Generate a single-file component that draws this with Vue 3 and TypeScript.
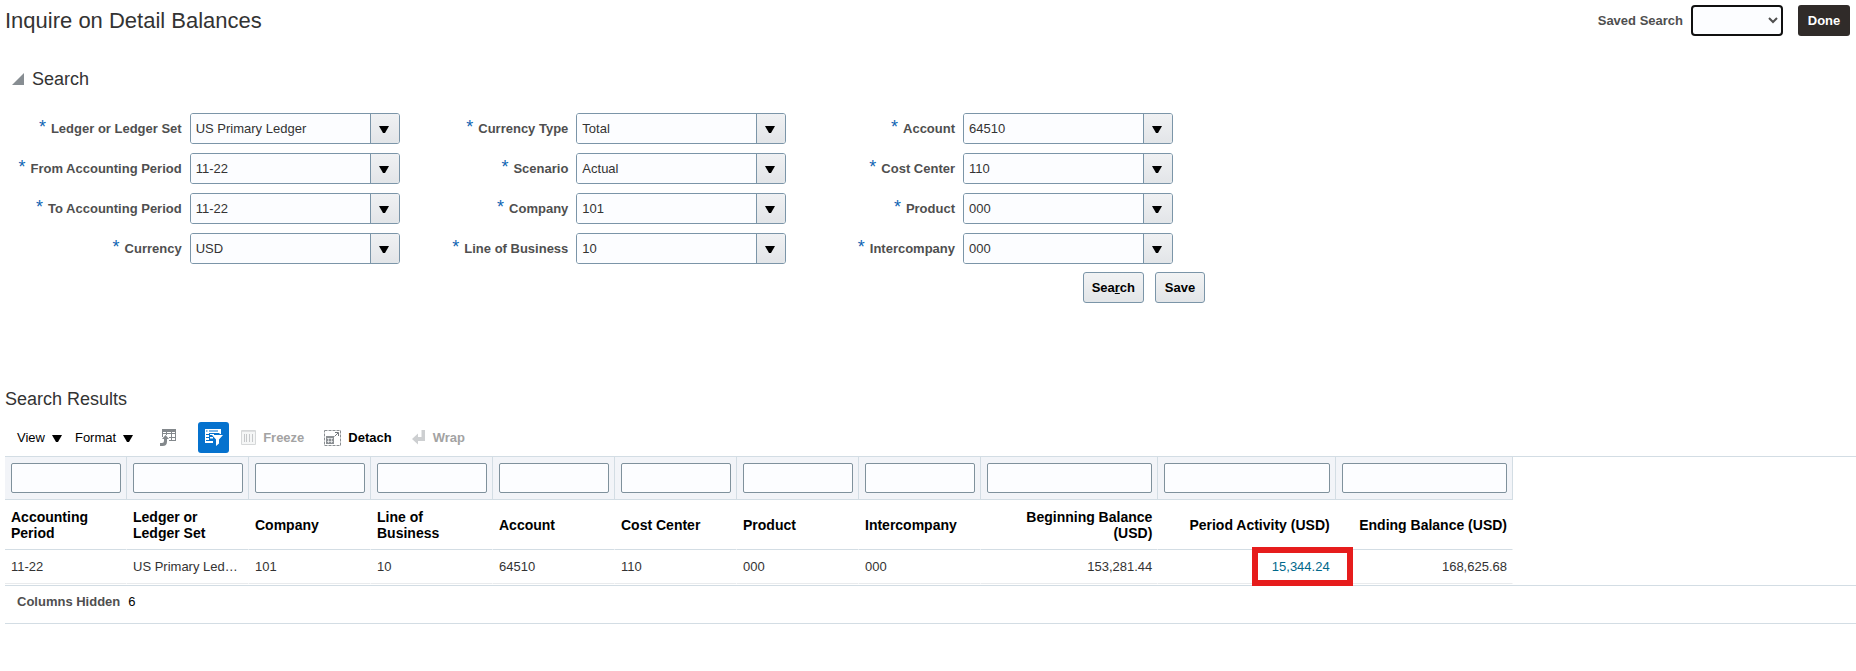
<script setup lang="ts">
import { reactive, ref } from 'vue'

interface Field {
  id: string
  label: string
  value: string
}

interface Column {
  id: string
  label: string
  value: string
  wide?: boolean
  link?: boolean
}

const fieldColumns = reactive<Field[][]>([
  [
    { id: 'ledger', label: 'Ledger or Ledger Set', value: 'US Primary Ledger' },
    { id: 'from-period', label: 'From Accounting Period', value: '11-22' },
    { id: 'to-period', label: 'To Accounting Period', value: '11-22' },
    { id: 'currency', label: 'Currency', value: 'USD' },
  ],
  [
    { id: 'currency-type', label: 'Currency Type', value: 'Total' },
    { id: 'scenario', label: 'Scenario', value: 'Actual' },
    { id: 'company', label: 'Company', value: '101' },
    { id: 'line', label: 'Line of Business', value: '10' },
  ],
  [
    { id: 'account', label: 'Account', value: '64510' },
    { id: 'cost-center', label: 'Cost Center', value: '110' },
    { id: 'product', label: 'Product', value: '000' },
    { id: 'intercompany', label: 'Intercompany', value: '000' },
  ],
])

const columns: Column[] = [
  { id: 'period', label: 'Accounting Period', value: '11-22' },
  { id: 'ledger', label: 'Ledger or Ledger Set', value: 'US Primary Ledger' },
  { id: 'company', label: 'Company', value: '101' },
  { id: 'line', label: 'Line of Business', value: '10' },
  { id: 'account', label: 'Account', value: '64510' },
  { id: 'cost-center', label: 'Cost Center', value: '110' },
  { id: 'product', label: 'Product', value: '000' },
  { id: 'intercompany', label: 'Intercompany', value: '000' },
  { id: 'beginning', label: 'Beginning Balance (USD)', value: '153,281.44', wide: true },
  { id: 'activity', label: 'Period Activity (USD)', value: '15,344.24', wide: true, link: true },
  { id: 'ending', label: 'Ending Balance (USD)', value: '168,625.68', wide: true },
]

const filters = reactive<Record<string, string>>({})
const expanded = ref(true)
</script>

<template>
  <main class="page">
    <header class="page-header">
      <h1>Inquire on Detail Balances</h1>
      <div class="header-tools">
        <label for="saved-search">Saved Search</label>
        <select id="saved-search"><option value=""></option></select>
        <button type="button" class="done">Done</button>
      </div>
    </header>

    <section class="search">
      <h2>
        <button type="button" class="disclosure" :aria-expanded="expanded" @click="expanded = !expanded">
          <svg width="12" height="12" viewBox="0 0 12 12" aria-hidden="true"><path d="M12 0v12H0z" fill="#878d92" /></svg>
          Search
        </button>
      </h2>
      <form v-show="expanded" class="criteria" @submit.prevent>
        <div class="field-columns">
          <div v-for="(group, g) in fieldColumns" :key="g" class="field-column">
            <div v-for="field in group" :key="field.id" class="field">
              <label :for="'q-' + field.id"><span class="required">*</span>{{ field.label }}</label>
              <div class="combo">
                <input :id="'q-' + field.id" v-model="field.value" type="text" />
                <button type="button" :aria-label="'Choose ' + field.label">
                  <svg width="10" height="7" viewBox="0 0 10 7" aria-hidden="true"><path d="M0 0h10L6 7H4z" /></svg>
                </button>
              </div>
            </div>
          </div>
        </div>
        <div class="actions">
          <button type="submit">Sea<u>r</u>ch</button>
          <button type="button">Save</button>
        </div>
      </form>
    </section>

    <section class="results">
      <h2>Search Results</h2>
      <div class="toolbar">
        <button type="button" class="menu">
          View
          <svg width="10" height="7" viewBox="0 0 10 7" aria-hidden="true"><path d="M0 0h10L6 7H4z" /></svg>
        </button>
        <button type="button" class="menu">
          Format
          <svg width="10" height="7" viewBox="0 0 10 7" aria-hidden="true"><path d="M0 0h10L6 7H4z" /></svg>
        </button>
        <button type="button" class="icon export" aria-label="Export to Excel">
          <svg width="17" height="17" viewBox="0 0 17 17" aria-hidden="true">
            <path d="M2 0h14v12H9v-1h2V9H9V8h2V5H7v1H6V5H3v3H2z M3 3v1h3V3z M7 3v1h4V3z M12 3v1h3V3z M12 5v3h3V5z M12 9v2h3V9z" fill="#83888c" fill-rule="evenodd" />
            <path d="M5.500 6L9 10H7v2.500Q7 17 2.500 17H0v-3h2Q4 14 4 12v-2H2z" fill="#83888c" />
          </svg>
        </button>
        <button type="button" class="icon filter" aria-label="Query By Example" aria-pressed="true">
          <svg width="18" height="17" viewBox="0 0 18 17" aria-hidden="true">
            <path d="M0 0h16v5h-1.500V4H4v8h4v2H0z" fill="#fff" />
            <path d="M5 5h4v1H5z M5 8h3v1.500H5z M7 6h11l-4 4.500v4L11 17v-6.500z" fill="#fff" />
            <path d="M4 1.500h9v1H4z M1 1.500h1.500v1H1z M1 5h3v1H1z M1 8h3v1H1z M1 11h3v1H1z" fill="#0572ce" />
          </svg>
        </button>
        <button type="button" class="tool freeze" disabled>
          <svg width="15" height="15" viewBox="0 0 15 15" aria-hidden="true">
            <path d="M.5 .5h14v14H.5z" fill="#f5f6f6" stroke="#d6d8d9" />
            <path d="M1 1.500h13" stroke="#dfe0e1" />
            <path d="M3.500 4v8M5.500 4v8M8.500 4v8M11.500 4v8" fill="none" stroke="#c6c8ca" />
          </svg>
          Freeze
        </button>
        <button type="button" class="tool detach">
          <svg width="17" height="16" viewBox="0 0 17 16" aria-hidden="true">
            <path d="M.5 .5h16v15H.5z" fill="none" stroke="#8b8f93" stroke-dasharray="3 1" />
            <path d="M2 6h8v8H2z" fill="#8b8f93" />
            <path d="M3 8.500h6M3 11.500h6M4.500 8v5M7.500 8v5" stroke="#fff" stroke-opacity=".6" />
            <path d="M10.500 6.500L14 3M11 2.500h3.500V6" fill="none" stroke="#74797d" />
          </svg>
          Detach
        </button>
        <button type="button" class="tool wrap" disabled>
          <svg width="14" height="15" viewBox="0 0 14 15" aria-hidden="true">
            <path d="M9.500 0H13v11H6v3.500L0 9l6-5.500V7h3.500z" fill="#cdcfd1" />
          </svg>
          Wrap
        </button>
      </div>

      <div class="table-area">
        <table>
          <colgroup>
            <col v-for="col in columns" :key="col.id" :class="col.wide ? 'wide' : 'normal'" />
          </colgroup>
          <thead>
            <tr class="filters">
              <td v-for="col in columns" :key="col.id">
                <input v-model="filters[col.id]" type="text" :aria-label="'Filter ' + col.label" />
              </td>
            </tr>
            <tr class="headings">
              <th v-for="col in columns" :key="col.id" scope="col" :class="{ number: col.wide }">{{ col.label }}</th>
            </tr>
          </thead>
          <tbody>
            <tr>
              <td v-for="col in columns" :key="col.id" :class="{ number: col.wide, marked: col.link }">
                <a v-if="col.link" href="#">{{ col.value }}</a>
                <template v-else>{{ col.value }}</template>
              </td>
            </tr>
          </tbody>
        </table>
      </div>
      <footer class="table-status"><strong>Columns Hidden</strong><span>6</span></footer>
    </section>
  </main>
</template>

<style>
body {
  background: #fff;
}
</style>

<style scoped>
.page {
  font: 13px/16px "Liberation Sans", Arial, sans-serif;
  color: #333;
}
*,
*::before {
  box-sizing: border-box;
}
button,
input,
select {
  margin: 0;
  font: inherit;
  color: inherit;
}
button {
  display: flex;
  align-items: center;
  justify-content: center;
  padding: 0;
  border: 0;
  background: none;
}
svg {
  display: block;
  flex: none;
}
h1,
h2 {
  margin: 0;
  font-weight: 400;
}
h1 {
  font-size: 22px;
  line-height: 31px;
}
h2 {
  font-size: 18px;
  line-height: 24px;
}
.page-header {
  display: flex;
  justify-content: space-between;
  padding: 5px 6px 0 5px;
}
.header-tools {
  display: flex;
  align-items: center;
  font-weight: 700;
  color: #4f4f4f;
}
.header-tools select {
  width: 92px;
  height: 31px;
  margin: 0 15px 0 8px;
  border: 2px solid #101010;
  border-radius: 4px;
  background: #fcfdff;
}
.done {
  width: 52px;
  height: 31px;
  border-radius: 3px;
  background: #302b29;
  color: #fff;
  font-weight: 700;
}
.search {
  padding-top: 31px;
}
.disclosure {
  gap: 8px;
  padding-left: 12px;
}
.criteria {
  width: 1205px;
  padding: 22px 0 0 13px;
}
.field-columns {
  display: flex;
  padding-right: 32px;
}
.field-column {
  display: flex;
  flex: 1;
  flex-direction: column;
  gap: 9px;
}
.field {
  display: flex;
  align-items: center;
  justify-content: flex-end;
  gap: 8px;
}
.field label {
  font-weight: 700;
  color: #4f4f4f;
}
.required {
  margin-right: 5px;
  font-size: 18px;
  font-weight: 400;
  line-height: 12px;
  vertical-align: top;
  color: #0f65b3;
}
.combo {
  display: flex;
  width: 210px;
  height: 31px;
  border: 1px solid #7b95a8;
  border-radius: 3px;
  overflow: hidden;
}
.combo input {
  flex: 1;
  min-width: 0;
  padding: 0 5px;
  border: 0;
  background: #fcfdff;
}
.combo button {
  width: 29px;
  padding: 2px 2px 0 0;
  border-left: 1px solid #7b95a8;
  background: linear-gradient(#f0f1f3, #e2e5e8);
}
.actions {
  display: flex;
  justify-content: flex-end;
  gap: 11px;
  padding-top: 8px;
}
.actions button {
  display: block;
  min-width: 50px;
  height: 31px;
  padding: 0 8px;
  border: 1px solid #7b95a8;
  border-radius: 3px;
  background: linear-gradient(#f2f3f4, #e2e5e8);
  color: #000;
  font-weight: 700;
}
.results {
  padding: 84px 0 0 5px;
}
.toolbar {
  display: flex;
  align-items: center;
  height: 31px;
  margin: 11px 0 3px;
  padding-left: 12px;
  color: #000;
}
.menu {
  gap: 7px;
  margin-right: 13px;
}
.menu svg {
  margin-top: 2px;
}
.export {
  margin-left: 14px;
}
.filter {
  width: 31px;
  height: 31px;
  margin: 0 12px 0 21px;
  border-radius: 3px;
  background: #0572ce;
}
.tool {
  gap: 7px;
  margin-right: 20px;
  font-weight: 700;
}
.tool:disabled {
  color: #a3a3a3;
}
.table-area {
  padding-bottom: 1px;
  border-top: 1px solid #d3dde4;
  border-bottom: 1px solid #d3dde4;
}
table {
  width: 1508px;
  table-layout: fixed;
  border-collapse: separate;
  border-spacing: 0;
}
.normal {
  width: 122px;
}
td,
th {
  padding: 0 5px 0 6px;
  border-right: 1px solid #fff;
  text-align: left;
}
.filters td {
  height: 43px;
  border-right-color: #d3dde4;
  border-bottom: 1px solid #d3dde4;
  background: #f2f4f8;
}
.filters input {
  display: block;
  width: 100%;
  height: 30px;
  padding: 0 5px;
  border: 1px solid #7f919c;
  border-radius: 2px;
  background: #fcfdff;
}
.headings th {
  height: 50px;
  border-bottom: 1px solid #d3dde4;
  font-size: 14px;
  color: #000;
}
tbody td {
  height: 34px;
  border-bottom: 1px solid #e9ebed;
  overflow: hidden;
  text-overflow: ellipsis;
  white-space: nowrap;
}
td.number,
th.number {
  text-align: right;
}
td.marked {
  position: relative;
  overflow: visible;
}
/* Callout frame drawn over the cell edges */
td.marked::before {
  content: "";
  position: absolute;
  inset: -3px -18px -3px 94px;
  border: 6px solid #e61c1c;
}
td a {
  position: relative;
  color: #00688b;
  text-decoration: none;
}
.table-status {
  display: flex;
  align-items: center;
  gap: 8px;
  height: 38px;
  padding: 0 12px 6px;
  border-bottom: 1px solid #d3dde4;
  color: #000;
}
.table-status strong {
  color: #4f4f4f;
}
</style>
